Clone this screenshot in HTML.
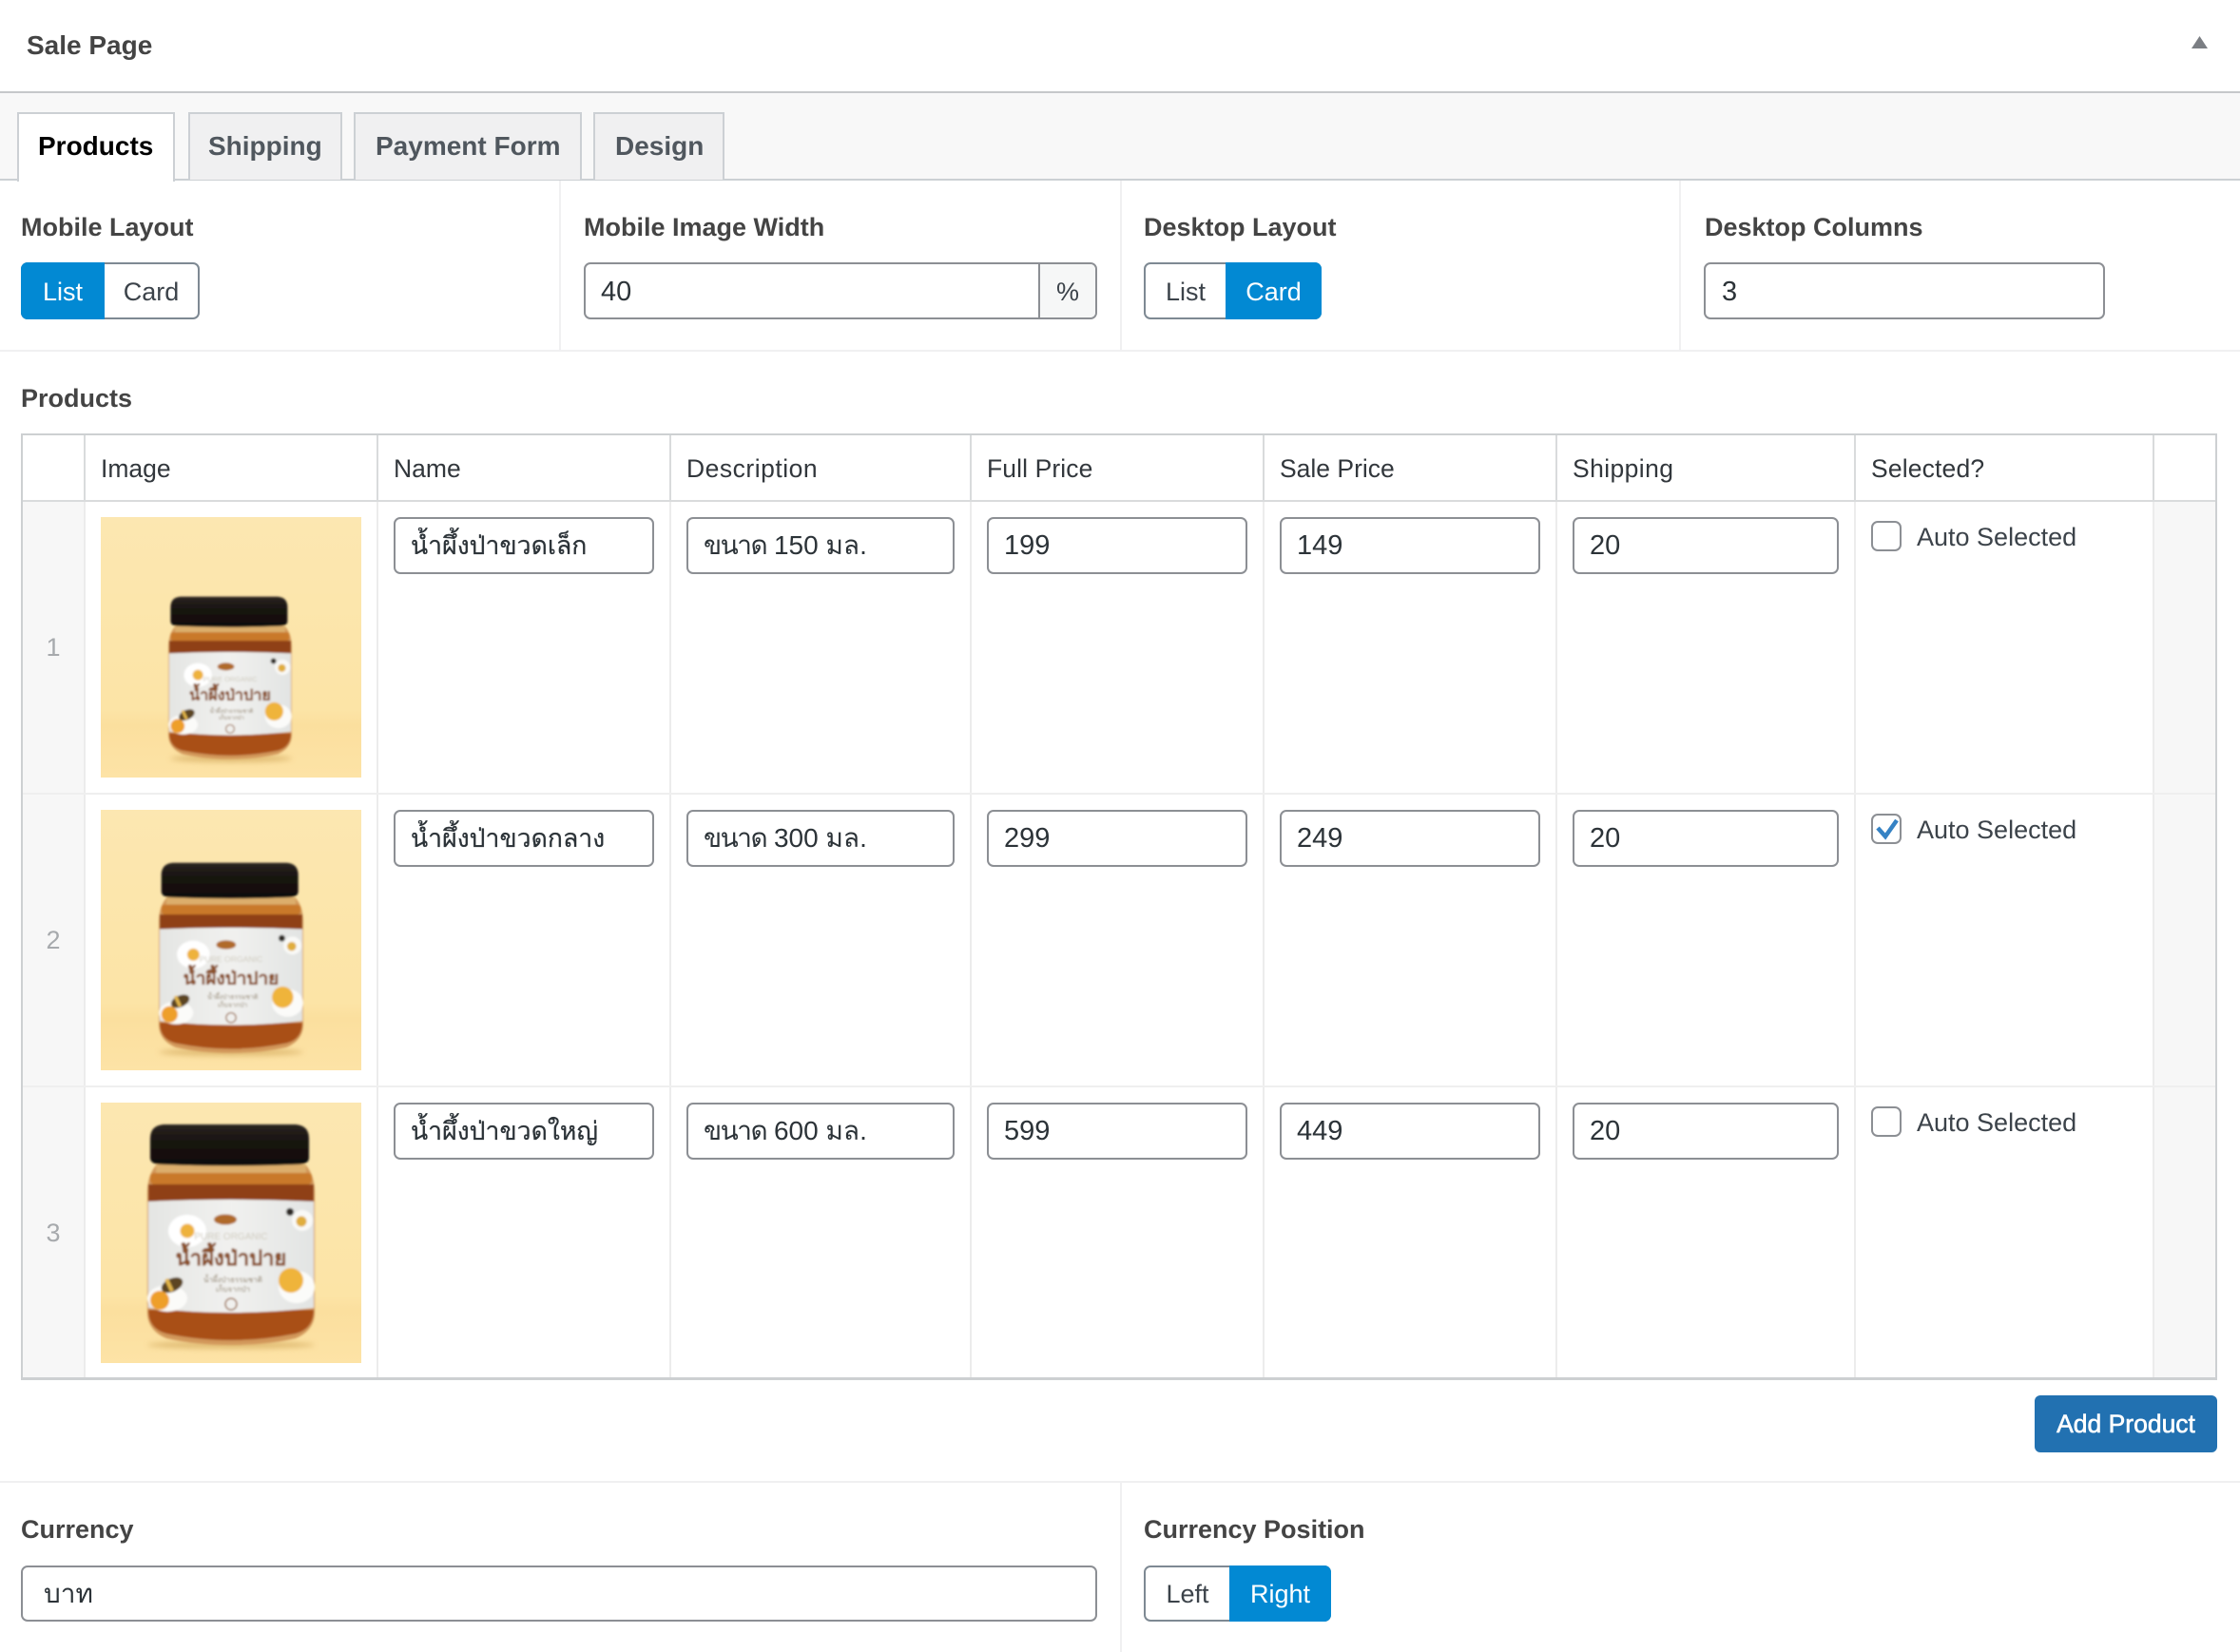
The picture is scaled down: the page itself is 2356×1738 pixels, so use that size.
<!DOCTYPE html>
<html lang="th"><head><meta charset="utf-8"><title>Sale Page</title>
<style>
html,body{margin:0;padding:0;background:#fff}
body{position:relative;width:2356px;height:1738px;overflow:hidden;font-family:"Liberation Sans","Noto Sans CJK SC","WenQuanYi Zen Hei",sans-serif;color:#3c434a}
.a{position:absolute;box-sizing:border-box}
.t{position:absolute;white-space:nowrap;height:40px;line-height:40px;font-size:27px}
.b{font-weight:700;color:#444}
.v{font-size:29px;color:#2c3338}
.n{font-size:26.6px;color:#2c3338;-webkit-text-stroke:.25px #2c3338}
.d{font-size:28px;color:#2c3338}
.d span{letter-spacing:-1.5px}
.h{font-size:26.5px;color:#32373c}
.i{position:absolute;box-sizing:border-box;border:2px solid #8c8f94;border-radius:7px;background:#fff}
.g{border-color:#7e8993}
.tab{position:absolute;box-sizing:border-box;top:118px;height:71px;border:2px solid #ccd0d4;border-bottom:0;background:#f0f0f1}
.on{position:absolute;background:#0289d3;top:0;height:60px}
.c{text-align:center}
.ln{position:absolute;background:#ececec}
.hl{position:absolute;background:#d9dbdc;top:457px;width:2px;height:70px}
.o{position:absolute;background:#cdd0d2}
</style></head><body>

<!-- header -->
<div class="t b" style="left:28px;top:28px;font-size:28px">Sale Page</div>
<svg class="a" style="left:2305px;top:38px" width="17" height="13"><path d="M8.5 0L17 13H0Z" fill="#7b7e83"/></svg>
<div class="a" style="left:0;top:96px;width:2356px;height:2px;background:#c6c8ca"></div>

<!-- tab bar -->
<div class="a" style="left:0;top:98px;width:2356px;height:90px;background:#f8f8f8"></div>
<div class="a" style="left:0;top:188px;width:2356px;height:2px;background:#ccd0d4"></div>
<div class="tab" style="left:18px;width:166px;height:73px;background:#fff"></div>
<div class="tab" style="left:198px;width:162px"></div>
<div class="tab" style="left:372px;width:240px"></div>
<div class="tab" style="left:624px;width:138px"></div>
<div class="t" style="left:40px;top:134px;font-size:28px;font-weight:700;color:#000">Products</div>
<div class="t" style="left:219px;top:134px;font-size:28px;font-weight:700;color:#50575e">Shipping</div>
<div class="t" style="left:395px;top:134px;font-size:28px;font-weight:700;color:#50575e">Payment Form</div>
<div class="t" style="left:647px;top:134px;font-size:28px;font-weight:700;color:#50575e">Design</div>

<!-- settings row -->
<div class="ln" style="left:0;top:368px;width:2356px;height:2px;background:#f0f0f1"></div>
<div class="ln" style="left:588px;top:190px;width:2px;height:178px;background:#f0f0f1"></div>
<div class="ln" style="left:1178px;top:190px;width:2px;height:178px;background:#f0f0f1"></div>
<div class="ln" style="left:1766px;top:190px;width:2px;height:178px;background:#f0f0f1"></div>

<div class="t b" style="left:22px;top:219px">Mobile Layout</div>
<div class="t b" style="left:614px;top:219px">Mobile Image Width</div>
<div class="t b" style="left:1203px;top:219px">Desktop Layout</div>
<div class="t b" style="left:1793px;top:219px">Desktop Columns</div>

<div class="i g" style="left:22px;top:276px;width:188px;height:60px"></div>
<div class="on" style="left:22px;top:276px;width:88px;border-radius:7px 0 0 7px"></div>
<div class="t c" style="left:22px;top:287px;width:88px;color:#fff">List</div>
<div class="t c" style="left:110px;top:287px;width:98px">Card</div>

<div class="i" style="left:614px;top:276px;width:540px;height:60px;overflow:hidden"><div class="a" style="left:476px;top:-2px;width:64px;height:60px;background:#f6f7f7;border-left:2px solid #8c8f94"></div></div>
<div class="t v" style="left:632px;top:287px">40</div>
<div class="t c" style="left:1093px;top:287px;width:60px">%</div>

<div class="i g" style="left:1203px;top:276px;width:187px;height:60px"></div>
<div class="on" style="left:1289px;top:276px;width:101px;border-radius:0 7px 7px 0"></div>
<div class="t c" style="left:1205px;top:287px;width:84px">List</div>
<div class="t c" style="left:1289px;top:287px;width:101px;color:#fff">Card</div>

<div class="i" style="left:1792px;top:276px;width:422px;height:60px"></div>
<div class="t v" style="left:1811px;top:287px">3</div>

<div class="t b" style="left:22px;top:399px">Products</div>

<!-- table -->
<div class="a" style="left:22px;top:527px;width:67px;height:924px;background:#f7f7f7"></div>
<div class="a" style="left:2265px;top:527px;width:66px;height:924px;background:#f7f7f7"></div>
<div class="hl" style="left:88px"></div>
<div class="hl" style="left:396px"></div>
<div class="hl" style="left:704px"></div>
<div class="hl" style="left:1020px"></div>
<div class="hl" style="left:1328px"></div>
<div class="hl" style="left:1636px"></div>
<div class="hl" style="left:1950px"></div>
<div class="hl" style="left:2264px"></div>
<div class="ln" style="left:88px;top:527px;width:2px;height:922px"></div>
<div class="ln" style="left:396px;top:527px;width:2px;height:922px"></div>
<div class="ln" style="left:704px;top:527px;width:2px;height:922px"></div>
<div class="ln" style="left:1020px;top:527px;width:2px;height:922px"></div>
<div class="ln" style="left:1328px;top:527px;width:2px;height:922px"></div>
<div class="ln" style="left:1636px;top:527px;width:2px;height:922px"></div>
<div class="ln" style="left:1950px;top:527px;width:2px;height:922px"></div>
<div class="ln" style="left:2264px;top:527px;width:2px;height:922px"></div>
<div class="ln" style="left:22px;top:834px;width:2309px;height:2px;background:#efefef"></div>
<div class="ln" style="left:22px;top:1142px;width:2309px;height:2px;background:#efefef"></div>
<div class="o" style="left:22px;top:526px;width:2309px;height:2px;background:#d9dbdc"></div>
<div class="o" style="left:22px;top:456px;width:2310px;height:2px"></div>
<div class="o" style="left:22px;top:1449px;width:2310px;height:3px"></div>
<div class="o" style="left:22px;top:456px;width:2px;height:996px"></div>
<div class="o" style="left:2330px;top:456px;width:2px;height:996px"></div>

<div class="t h" style="left:106px;top:473px">Image</div>
<div class="t h" style="left:414px;top:473px">Name</div>
<div class="t h" style="left:722px;top:473px;letter-spacing:.5px">Description</div>
<div class="t h" style="left:1038px;top:473px;letter-spacing:.1px">Full Price</div>
<div class="t h" style="left:1346px;top:473px">Sale Price</div>
<div class="t h" style="left:1654px;top:473px;letter-spacing:.4px">Shipping</div>
<div class="t h" style="left:1968px;top:473px;letter-spacing:.15px">Selected?</div>

<div class="t c" style="left:24px;top:661px;width:64px;color:#a7aaad">1</div>
<div class="t c" style="left:24px;top:969px;width:64px;color:#a7aaad">2</div>
<div class="t c" style="left:24px;top:1277px;width:64px;color:#a7aaad">3</div>

<!-- images -->
<svg class="a" style="left:0;top:0" width="0" height="0"><defs>
<linearGradient id="bg" x1="0" y1="0" x2="0" y2="1"><stop offset="0" stop-color="#fce7b1"/><stop offset=".74" stop-color="#fce4a6"/><stop offset=".8" stop-color="#fbdf9e"/><stop offset="1" stop-color="#fde3a6"/></linearGradient>
<linearGradient id="lid" x1="0" y1="0" x2="0" y2="1"><stop offset="0" stop-color="#2b2521"/><stop offset=".35" stop-color="#1a1512"/><stop offset="1" stop-color="#0f0c0a"/></linearGradient>
<linearGradient id="lab" x1="0" y1="0" x2="1" y2="0"><stop offset="0" stop-color="#e4e5e3"/><stop offset=".5" stop-color="#f1f1ef"/><stop offset="1" stop-color="#e2e4e3"/></linearGradient>
<filter id="bl" x="-5%" y="-5%" width="110%" height="110%"><feGaussianBlur stdDeviation="1.1"/></filter>
<filter id="sh" x="-20%" y="-200%" width="140%" height="500%"><feGaussianBlur stdDeviation="3"/></filter>
</defs></svg>

<svg class="a" style="left:106px;top:544px" width="274" height="274" viewBox="0 0 274 274">
<rect width="274" height="274" fill="url(#bg)"/>
<ellipse cx="137" cy="254" rx="64" ry="4" fill="#d6ad62" opacity=".7" filter="url(#sh)"/>
<g filter="url(#bl)"><g transform="translate(136 253) scale(.736) translate(-137 -253)">
<path d="M58 66H216Q226 78 225 100V222Q224 240 205 248Q175 255 137 255Q99 255 69 248Q50 240 49 222V100Q48 78 58 66Z" fill="#d2975a"/>
<rect x="58" y="65" width="158" height="9" fill="#dcae6c"/>
<rect x="52" y="74" width="170" height="12" rx="4" fill="#c9792c"/>
<rect x="50" y="86" width="174" height="18" fill="#8f3f12"/>
<path d="M50 218H224Q224 238 205 243Q170 250 137 250Q104 250 69 243Q50 238 50 218Z" fill="#a94f14"/>
<path d="M50 104Q137 100 224 104V216Q137 226 50 216Z" fill="url(#lab)"/>
<path d="M66 23H205Q219 24 219 38V58Q219 64 210 65Q137 68 61 65Q52 64 52 58V38Q52 24 66 23Z" fill="url(#lid)"/>
<ellipse cx="131" cy="123" rx="12" ry="5.5" fill="#b06a2a"/>
<ellipse cx="91" cy="135" rx="20" ry="17" fill="#fff"/><circle cx="91" cy="135" r="7.5" fill="#eeb23c"/>
<ellipse cx="212" cy="124" rx="11" ry="11" fill="#f9f9f7"/><circle cx="211" cy="125" r="5.5" fill="#e0ae3c"/><circle cx="199" cy="115" r="4" fill="#2d2a26"/>
<text x="137" y="144" text-anchor="middle" font-size="10" fill="#cfcbbf">PURE ORGANIC</text>
<text x="137" y="171" text-anchor="middle" font-size="22" font-weight="700" fill="#8a4f28" stroke="#8a4f28" stroke-width=".4">น้ำผึ้งป่าปาย</text>
<text x="139" y="189" text-anchor="middle" font-size="8" fill="#8a7a60">น้ำผึ้งป่าธรรมชาติ</text>
<text x="139" y="199" text-anchor="middle" font-size="8" fill="#8a7a60">เก็บจากป่า</text>
<ellipse cx="206" cy="194" rx="19" ry="17" fill="#fbfbf9"/><circle cx="200" cy="187" r="13" fill="#efb43a"/>
<ellipse cx="70" cy="206" rx="21" ry="14" fill="#fbfbf9"/><circle cx="62" cy="208" r="10" fill="#ee9f2c"/>
<ellipse cx="75" cy="192" rx="12" ry="7" transform="rotate(-25 75 192)" fill="#5c4420"/><rect x="70" y="185" width="4" height="14" fill="#e3b64c" transform="rotate(-25 72 192)"/>
<circle cx="137" cy="212" r="6" fill="none" stroke="#9a6a4a" stroke-width="1.5"/>
</g></g></svg>

<svg class="a" style="left:106px;top:852px" width="274" height="274" viewBox="0 0 274 274">
<rect width="274" height="274" fill="url(#bg)"/>
<ellipse cx="137" cy="255" rx="76" ry="4" fill="#d6ad62" opacity=".7" filter="url(#sh)"/>
<g filter="url(#bl)"><g transform="translate(137 254) scale(.862) translate(-137 -253)">
<path d="M58 66H216Q226 78 225 100V222Q224 240 205 248Q175 255 137 255Q99 255 69 248Q50 240 49 222V100Q48 78 58 66Z" fill="#d2975a"/>
<rect x="58" y="65" width="158" height="9" fill="#dcae6c"/>
<rect x="52" y="74" width="170" height="12" rx="4" fill="#c9792c"/>
<rect x="50" y="86" width="174" height="18" fill="#8f3f12"/>
<path d="M50 218H224Q224 238 205 243Q170 250 137 250Q104 250 69 243Q50 238 50 218Z" fill="#a94f14"/>
<path d="M50 104Q137 100 224 104V216Q137 226 50 216Z" fill="url(#lab)"/>
<path d="M66 23H205Q219 24 219 38V58Q219 64 210 65Q137 68 61 65Q52 64 52 58V38Q52 24 66 23Z" fill="url(#lid)"/>
<ellipse cx="131" cy="123" rx="12" ry="5.5" fill="#b06a2a"/>
<ellipse cx="91" cy="135" rx="20" ry="17" fill="#fff"/><circle cx="91" cy="135" r="7.5" fill="#eeb23c"/>
<ellipse cx="212" cy="124" rx="11" ry="11" fill="#f9f9f7"/><circle cx="211" cy="125" r="5.5" fill="#e0ae3c"/><circle cx="199" cy="115" r="4" fill="#2d2a26"/>
<text x="137" y="144" text-anchor="middle" font-size="10" fill="#cfcbbf">PURE ORGANIC</text>
<text x="137" y="171" text-anchor="middle" font-size="22" font-weight="700" fill="#8a4f28" stroke="#8a4f28" stroke-width=".4">น้ำผึ้งป่าปาย</text>
<text x="139" y="189" text-anchor="middle" font-size="8" fill="#8a7a60">น้ำผึ้งป่าธรรมชาติ</text>
<text x="139" y="199" text-anchor="middle" font-size="8" fill="#8a7a60">เก็บจากป่า</text>
<ellipse cx="206" cy="194" rx="19" ry="17" fill="#fbfbf9"/><circle cx="200" cy="187" r="13" fill="#efb43a"/>
<ellipse cx="70" cy="206" rx="21" ry="14" fill="#fbfbf9"/><circle cx="62" cy="208" r="10" fill="#ee9f2c"/>
<ellipse cx="75" cy="192" rx="12" ry="7" transform="rotate(-25 75 192)" fill="#5c4420"/><rect x="70" y="185" width="4" height="14" fill="#e3b64c" transform="rotate(-25 72 192)"/>
<circle cx="137" cy="212" r="6" fill="none" stroke="#9a6a4a" stroke-width="1.5"/>
</g></g></svg>

<svg class="a" style="left:106px;top:1160px" width="274" height="274" viewBox="0 0 274 274">
<rect width="274" height="274" fill="url(#bg)"/>
<ellipse cx="137" cy="255" rx="88" ry="4" fill="#d6ad62" opacity=".7" filter="url(#sh)"/>
<g filter="url(#bl)">
<path d="M58 66H216Q226 78 225 100V222Q224 240 205 248Q175 255 137 255Q99 255 69 248Q50 240 49 222V100Q48 78 58 66Z" fill="#d2975a"/>
<rect x="58" y="65" width="158" height="9" fill="#dcae6c"/>
<rect x="52" y="74" width="170" height="12" rx="4" fill="#c9792c"/>
<rect x="50" y="86" width="174" height="18" fill="#8f3f12"/>
<path d="M50 218H224Q224 238 205 243Q170 250 137 250Q104 250 69 243Q50 238 50 218Z" fill="#a94f14"/>
<path d="M50 104Q137 100 224 104V216Q137 226 50 216Z" fill="url(#lab)"/>
<path d="M66 23H205Q219 24 219 38V58Q219 64 210 65Q137 68 61 65Q52 64 52 58V38Q52 24 66 23Z" fill="url(#lid)"/>
<ellipse cx="131" cy="123" rx="12" ry="5.5" fill="#b06a2a"/>
<ellipse cx="91" cy="135" rx="20" ry="17" fill="#fff"/><circle cx="91" cy="135" r="7.5" fill="#eeb23c"/>
<ellipse cx="212" cy="124" rx="11" ry="11" fill="#f9f9f7"/><circle cx="211" cy="125" r="5.5" fill="#e0ae3c"/><circle cx="199" cy="115" r="4" fill="#2d2a26"/>
<text x="137" y="144" text-anchor="middle" font-size="10" fill="#cfcbbf">PURE ORGANIC</text>
<text x="137" y="171" text-anchor="middle" font-size="22" font-weight="700" fill="#8a4f28" stroke="#8a4f28" stroke-width=".4">น้ำผึ้งป่าปาย</text>
<text x="139" y="189" text-anchor="middle" font-size="8" fill="#8a7a60">น้ำผึ้งป่าธรรมชาติ</text>
<text x="139" y="199" text-anchor="middle" font-size="8" fill="#8a7a60">เก็บจากป่า</text>
<ellipse cx="206" cy="194" rx="19" ry="17" fill="#fbfbf9"/><circle cx="200" cy="187" r="13" fill="#efb43a"/>
<ellipse cx="70" cy="206" rx="21" ry="14" fill="#fbfbf9"/><circle cx="62" cy="208" r="10" fill="#ee9f2c"/>
<ellipse cx="75" cy="192" rx="12" ry="7" transform="rotate(-25 75 192)" fill="#5c4420"/><rect x="70" y="185" width="4" height="14" fill="#e3b64c" transform="rotate(-25 72 192)"/>
<circle cx="137" cy="212" r="6" fill="none" stroke="#9a6a4a" stroke-width="1.5"/>
</g></svg>

<!-- row 1 -->
<div class="i" style="left:414px;top:544px;width:274px;height:60px"></div><div class="t n" style="left:432px;top:554px">น้ำผึ้งป่าขวดเล็ก</div>
<div class="i" style="left:722px;top:544px;width:282px;height:60px"></div><div class="t d" style="left:740px;top:554px"><span>ขนาด</span> 150 มล.</div>
<div class="i" style="left:1038px;top:544px;width:274px;height:60px"></div><div class="t v" style="left:1056px;top:554px">199</div>
<div class="i" style="left:1346px;top:544px;width:274px;height:60px"></div><div class="t v" style="left:1364px;top:554px">149</div>
<div class="i" style="left:1654px;top:544px;width:280px;height:60px"></div><div class="t v" style="left:1672px;top:554px">20</div>
<div class="i" style="left:1968px;top:548px;width:32px;height:32px"></div><div class="t" style="left:2016px;top:545px">Auto Selected</div>

<!-- row 2 -->
<div class="i" style="left:414px;top:852px;width:274px;height:60px"></div><div class="t n" style="left:432px;top:862px">น้ำผึ้งป่าขวดกลาง</div>
<div class="i" style="left:722px;top:852px;width:282px;height:60px"></div><div class="t d" style="left:740px;top:862px"><span>ขนาด</span> 300 มล.</div>
<div class="i" style="left:1038px;top:852px;width:274px;height:60px"></div><div class="t v" style="left:1056px;top:862px">299</div>
<div class="i" style="left:1346px;top:852px;width:274px;height:60px"></div><div class="t v" style="left:1364px;top:862px">249</div>
<div class="i" style="left:1654px;top:852px;width:280px;height:60px"></div><div class="t v" style="left:1672px;top:862px">20</div>
<div class="i" style="left:1968px;top:856px;width:32px;height:32px"></div>
<svg class="a" style="left:1968px;top:856px" width="32" height="32"><path d="M7 15L15 24L27 7" fill="none" stroke="#3582c4" stroke-width="4.5"/></svg>
<div class="t" style="left:2016px;top:853px">Auto Selected</div>

<!-- row 3 -->
<div class="i" style="left:414px;top:1160px;width:274px;height:60px"></div><div class="t n" style="left:432px;top:1170px">น้ำผึ้งป่าขวดใหญ่</div>
<div class="i" style="left:722px;top:1160px;width:282px;height:60px"></div><div class="t d" style="left:740px;top:1170px"><span>ขนาด</span> 600 มล.</div>
<div class="i" style="left:1038px;top:1160px;width:274px;height:60px"></div><div class="t v" style="left:1056px;top:1170px">599</div>
<div class="i" style="left:1346px;top:1160px;width:274px;height:60px"></div><div class="t v" style="left:1364px;top:1170px">449</div>
<div class="i" style="left:1654px;top:1160px;width:280px;height:60px"></div><div class="t v" style="left:1672px;top:1170px">20</div>
<div class="i" style="left:1968px;top:1164px;width:32px;height:32px"></div><div class="t" style="left:2016px;top:1161px">Auto Selected</div>

<!-- add product -->
<div class="a" style="left:2140px;top:1468px;width:192px;height:60px;background:#2271b1;border-radius:6px"></div>
<div class="t c" style="left:2140px;top:1478px;width:192px;color:#fff;font-size:26.5px;-webkit-text-stroke:.6px #fff">Add Product</div>

<!-- currency -->
<div class="a" style="left:0;top:1558px;width:2356px;height:2px;background:#f0f0f1"></div>
<div class="a" style="left:1178px;top:1560px;width:2px;height:178px;background:#f0f0f1"></div>
<div class="t b" style="left:22px;top:1589px">Currency</div>
<div class="t b" style="left:1203px;top:1589px">Currency Position</div>
<div class="i" style="left:22px;top:1647px;width:1132px;height:59px"></div>
<div class="t d" style="left:46px;top:1657px">บาท</div>
<div class="i g" style="left:1203px;top:1647px;width:197px;height:59px"></div>
<div class="on" style="left:1293px;top:1647px;width:107px;height:59px;border-radius:0 7px 7px 0"></div>
<div class="t c" style="left:1205px;top:1657px;width:88px">Left</div>
<div class="t c" style="left:1293px;top:1657px;width:107px;color:#fff">Right</div>

</body></html>
